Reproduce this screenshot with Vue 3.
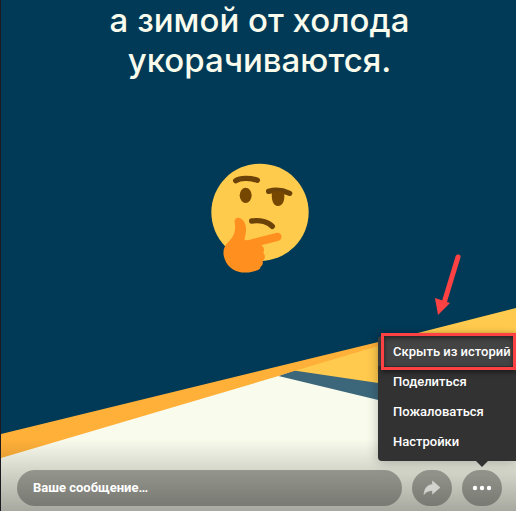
<template>
  <main class="story">
    <!-- Fondo de la historia -->
    <svg class="scene" viewBox="0 0 516 211" preserveAspectRatio="none" aria-hidden="true">
      <polygon fill="#f9fbed" points="0,150 280,70 516,70 516,211 0,211" />
      <polygon fill="#3c677b" points="278,76 297,69 378,82 516,105 516,130 378,100" />
      <polygon fill="#ffca4d" points="290,70 378,43 516,8 516,105 378,83" />
      <polygon fill="#ffb039" points="0,134 378,42 416,33 378,46 297,70 278,76 0,158" />
    </svg>
    <div class="shade"></div>

    <section class="content">
      <p class="caption">а зимой от холода<br />укорачиваются.</p>
      <svg class="emoji" viewBox="0 0 360 375" role="img" aria-label="thinking">
        <circle cx="180" cy="172" r="146" fill="#ffcb4d" />
        <g fill="none" stroke="#6b4208" stroke-width="16" stroke-linecap="round" stroke-linejoin="round">
          <path d="M107 77C120 69 150 67 172 76" />
          <path d="M206 109C225 103 250 106 269 115" />
          <path d="M155 198C181 194 205 201 217 214" />
        </g>
        <ellipse cx="137" cy="121" rx="18" ry="23" fill="#754700" />
        <path d="M216 110C227 107 241 108 252 112C256 137 248 153 234 153C220 153 213 135 216 110Z" fill="#754700" />
        <path
          fill="#ff9020"
          d="M104 201C103 190 112 186 121 190C133 195 139 211 138 226C138 239 133 250 134 255C145 257 159 251 177 247L228 234C240 231 248 241 243 251C240 257 233 258 225 260L184 271C192 276 194 285 190 293C197 301 196 310 188 317C190 327 186 334 181 336C183 344 169 347 157 350C122 359 86 346 74 312C67 293 70 276 84 262C103 244 108 227 104 201Z"
        />
      </svg>
    </section>

    <footer class="bar">
      <input
        v-model="message"
        class="message"
        type="text"
        placeholder="Ваше сообщение…"
        aria-label="Ваше сообщение"
      />
      <button class="round" type="button" aria-label="Поделиться">
        <svg width="18" height="16" viewBox="0 0 18 16">
          <path d="M9.5 1L17 7.5L9.5 14V10.5C6 10.5 3 11.5 1 14.5C1.5 8.500 4 5 9.500 4.500Z" fill="#d2d3cf" stroke="#d2d3cf" stroke-width="0.6" stroke-linejoin="round" />
        </svg>
      </button>
      <div class="more">
        <button class="round" type="button" aria-label="Ещё" @click="isOpen = !isOpen">
          <svg width="20" height="6" viewBox="0 0 20 6" fill="#fff">
            <circle cx="3" cy="3" r="2.2" />
            <circle cx="10" cy="3" r="2.2" />
            <circle cx="17" cy="3" r="2.2" />
          </svg>
        </button>
        <div v-if="isOpen" class="menu">
          <button
            v-for="(item, i) in items"
            :key="item"
            class="item"
            :class="{ active: i === 0 }"
            type="button"
          >
            {{ item }}
          </button>
          <svg class="pointer" viewBox="0 0 30 66" aria-hidden="true">
            <path d="M25 5L11 51" fill="none" stroke="#fe4244" stroke-width="5" stroke-linecap="round" />
            <polygon points="2,46 17,51 5,63" fill="#fe4244" />
          </svg>
        </div>
      </div>
    </footer>
  </main>
</template>

<script setup>
import { ref } from "vue";

const message = ref("");
const isOpen = ref(true);
const items = ["Скрыть из историй", "Поделиться", "Пожаловаться", "Настройки"];
</script>

<style>
body {
  margin: 0;
}
</style>

<style scoped>
.story {
  position: relative;
  display: flex;
  flex-direction: column;
  box-sizing: border-box;
  min-height: 100vh;
  overflow: hidden;
  border-left: 1px solid #1b1b1f;
  background: #003a56;
  font-family: Roboto, sans-serif;
}

.scene {
  position: absolute; /* detrás del contenido */
  left: 0;
  bottom: 0;
  width: 100%;
  height: 211px;
}

.shade {
  position: absolute;
  left: 0;
  right: 0;
  bottom: 0;
  height: 72px;
  background: linear-gradient(rgba(0, 0, 0, 0), rgba(0, 0, 0, 0.17) 50%, rgba(0, 0, 0, 0.33));
}

.content {
  position: relative;
  flex: 1;
  display: flex;
  flex-direction: column;
  align-items: center;
  padding-left: 2px;
}

.caption {
  margin: 0;
  color: #f9fbed;
  font-family: Inter, sans-serif;
  font-size: 33px;
  font-weight: 500;
  line-height: 40px;
  text-align: center;
}

.emoji {
  width: 120px;
  height: 125px;
  margin-top: 75px;
}

.bar {
  position: relative;
  display: flex;
  gap: 10px;
  padding: 0 14px 5px 16px;
}

.message {
  flex: 1;
  min-width: 0;
  box-sizing: border-box;
  height: 36px;
  padding: 0 16px 1px;
  border: 0;
  border-radius: 18px;
  outline: none;
  background: rgba(0, 0, 0, 0.3);
  color: #fff;
  font-family: inherit;
  font-size: 13px;
  font-weight: 700;
}

.message::placeholder {
  color: #fff;
  opacity: 1;
}

.round {
  display: flex;
  align-items: center;
  justify-content: center;
  width: 40px;
  height: 36px;
  padding: 0;
  border: 0;
  border-radius: 18px;
  background: rgba(0, 0, 0, 0.3);
  cursor: pointer;
}

.more {
  position: relative;
}

.menu {
  position: absolute;
  right: -14px;
  bottom: 45px;
  width: 138px;
  padding: 0 0 5px;
  border-radius: 4px 0 0 4px;
  background: #323232;
  box-shadow: 0 1px 12px rgba(0, 0, 0, 0.25);
}

.menu::after {
  content: "";
  position: absolute;
  right: 28px;
  top: 100%;
  border: 6px solid transparent;
  border-top-color: #323232;
  border-bottom: 0;
}

.item {
  position: relative;
  display: block;
  width: 100%;
  height: 30px;
  padding: 0 0 0 15px;
  border: 0;
  background: none;
  color: #fff;
  font-family: inherit;
  font-size: 13px;
  font-weight: 500;
  text-align: left;
  white-space: nowrap;
  cursor: pointer;
}

.active {
  border-radius: 4px 0 0;
  background: #444;
}

/* marco rojo sobre la primera opción */
.active::after {
  content: "";
  position: absolute;
  inset: -3px 0 -4px 3px;
  border: 3px solid #fe4244;
  box-shadow: 0 2px 5px rgba(0, 0, 0, 0.5), inset 0 2px 5px rgba(0, 0, 0, 0.5);
}

.pointer {
  position: absolute;
  right: 53px;
  bottom: 143px;
  width: 30px;
  height: 66px;
}
</style>
